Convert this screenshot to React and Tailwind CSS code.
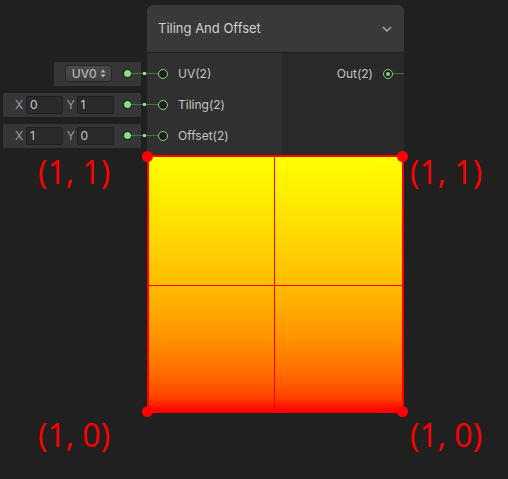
import React from 'react'

function InPort({ label }) {
  return (
    <div className="h-[31px] flex items-center">
      <div className="w-[11px] h-[1.5px] bg-[#4a7446]" />
      <div className="w-[10px] h-[10px] rounded-full border-[1.5px] border-[#84d87d] bg-[#1e1e1e]" />
      <span className="ml-[10px] text-[12px] text-[#c4c4c4]">{label}</span>
    </div>
  )
}

function Dot() {
  return (
    <>
      <div className="w-[7px] h-[7px] rounded-full bg-[#86e07e] ring-1 ring-[#151515]" />
      <div className="w-[10px] h-[1.5px] bg-[#4a7446]" />
    </>
  )
}

function Field({ value, w }) {
  return (
    <div className={`${w} h-[18px] bg-[#2a2a2a] border border-[#1f1f1f] rounded-[2px] pl-[3px] flex items-center text-[12px] text-[#c8c8c8]`}>
      {value}
    </div>
  )
}

function Link() {
  return (
    <div className="w-[6px] flex items-center">
      <div className="w-[2px] h-[1.5px] bg-[#4a7446]" />
      <div className="w-[3px] h-[3px] bg-[#86e07e]" />
      <div className="w-[1px] h-[1.5px] bg-[#4a7446]" />
    </div>
  )
}

function VecPanel({ x, y }) {
  return (
    <div className="h-[31px] flex items-center justify-end">
      <div className="w-[138px] h-[24px] bg-[#363636] flex items-center pl-[12px]">
        <span className="w-[11px] text-[12px] text-[#9c9c9c]">X</span>
        <Field value={x} w="w-[37px]" />
        <span className="w-[14px] pl-[4px] text-[12px] text-[#9c9c9c]">Y</span>
        <Field value={y} w="w-[38px]" />
        <div className="w-[10px]" />
        <Dot />
      </div>
      <Link />
    </div>
  )
}

export default function App() {
  return (
    <div className="w-[508px] h-[479px] bg-[#202020] overflow-hidden font-['Inter',sans-serif] grid grid-cols-[147px_257px_1fr] grid-rows-[155px_258px_1fr]">
      {/* input fields */}
      <div className="pt-[58px] flex flex-col">
        <div className="h-[31px] flex items-center justify-end">
          <div className="w-[87px] h-[24px] bg-[#363636] flex items-center pl-[11px]">
            <div className="w-[48px] h-[17px] rounded-[3px] border border-[#262626] bg-[linear-gradient(to_bottom,#4a4a4a,#3f3f3f)] flex items-center justify-center gap-[3px] text-[12px] text-[#c4c4c4]">
              UV0
              <svg width="6" height="9" viewBox="0 0 6 9">
                <path d="M3 0.5 L5.5 3.5 H0.5 Z M3 8.5 L5.5 5.5 H0.5 Z" fill="#b8b8b8" />
              </svg>
            </div>
            <div className="w-[12px]" />
            <Dot />
          </div>
          <Link />
        </div>
        <VecPanel x="0" y="1" />
        <VecPanel x="1" y="0" />
      </div>

      {/* node */}
      <div className="mt-[5px] rounded-t-[6px] overflow-hidden flex flex-col">
        <div className="h-[48px] bg-[#393939] border-b border-[#1f1f1f] flex items-center justify-between pl-[11px] pr-[12px]">
          <span className="text-[13px] text-[#d0d0d0]">Tiling And Offset</span>
          <svg width="10" height="6" viewBox="0 0 10 6">
            <polyline points="1,1 5,5 9,1" fill="none" stroke="#b0b0b0" strokeWidth="1.4" />
          </svg>
        </div>
        <div className="flex-1 flex">
          <div className="w-[135px] bg-[#303030] pt-[5px]">
            <InPort label="UV(2)" />
            <InPort label="Tiling(2)" />
            <InPort label="Offset(2)" />
          </div>
          <div className="flex-1 bg-[#2a2a2a] pt-[5px]">
            <div className="h-[31px] flex items-center justify-end">
              <span className="text-[12px] text-[#c4c4c4]">Out(2)</span>
              <div className="ml-[10px] w-[10px] h-[10px] rounded-full border-[1.5px] border-[#84d87d] bg-[#1e1e1e] flex items-center justify-center">
                <div className="w-[4px] h-[4px] rounded-full bg-[#84d87d]" />
              </div>
              <div className="w-[11px] h-[1.5px] bg-[#4a7446]" />
            </div>
          </div>
        </div>
      </div>

      <div />

      {/* preview row */}
      <div className="pl-[38px] pt-[1px] font-['Open_Sans',sans-serif] text-[32px] leading-none text-[#ff0000]">(1, 1)</div>

      <div className="relative border-2 border-[#ff0000] bg-[linear-gradient(to_bottom,#ffff00_0%,#fff300_10%,#ffe700_20%,#ffda00_30%,#ffcb00_40%,#ffbc00_50%,#ffaa00_60%,#ff9500_70%,#ff7c00_80%,#ff5900_90%,#ff3f00_95%,#ff0000_100%)]">
        <div className="absolute left-[125px] top-0 bottom-0 w-px bg-[#ff0000]" />
        <div className="absolute top-[128px] left-0 right-0 h-px bg-[#ff0000]" />
        <div className="absolute -left-[7px] -top-[6px] w-[11px] h-[11px] rounded-full bg-[#ff0000]" />
        <div className="absolute -right-[6px] -top-[6px] w-[11px] h-[11px] rounded-full bg-[#ff0000]" />
        <div className="absolute -left-[7px] -bottom-[6px] w-[11px] h-[11px] rounded-full bg-[#ff0000]" />
        <div className="absolute -right-[6px] -bottom-[6px] w-[11px] h-[11px] rounded-full bg-[#ff0000]" />
      </div>

      <div className="pl-[6px] pt-[1px] font-['Open_Sans',sans-serif] text-[32px] leading-none text-[#ff0000]">(1, 1)</div>

      {/* bottom row */}
      <div className="pl-[38px] pt-[6px] font-['Open_Sans',sans-serif] text-[32px] leading-none text-[#ff0000]">(1, 0)</div>
      <div />
      <div className="pl-[6px] pt-[6px] font-['Open_Sans',sans-serif] text-[32px] leading-none text-[#ff0000]">(1, 0)</div>
    </div>
  )
}
